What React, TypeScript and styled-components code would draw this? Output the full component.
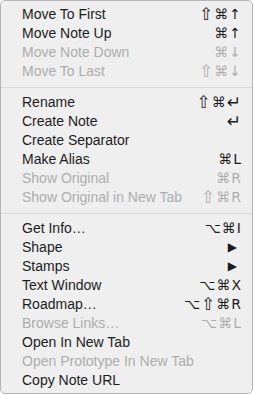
import React from "react";
import styled, { createGlobalStyle } from "styled-components";

const Global = createGlobalStyle`
  html, body { margin: 0; padding: 0; background: #ffffff; }
  #root { width: 253px; height: 394px; }
`;

const Menu = styled.div`
  box-sizing: border-box;
  width: 253px;
  height: 394px;
  background: #efefef;
  border: 1px solid #b4b4b4;
  border-radius: 5px;
  padding: 4px 0 3px;
  display: flex;
  flex-direction: column;
  font-family: "Liberation Sans", Arial, sans-serif;
  font-size: 14px;
  overflow: hidden;
`;

const Row = styled.div<{ $disabled?: boolean }>`
  height: 19px;
  display: flex;
  align-items: center;
  justify-content: space-between;
  padding: 0 11px 0 21px;
  color: ${(p) => (p.$disabled ? "#adadad" : "#1c1c1c")};
  white-space: nowrap;
`;

const Label = styled.span`
  line-height: 19px;
`;

const Shortcut = styled.span`
  display: flex;
  align-items: center;
  gap: 1px;
  font-family: "DejaVu Sans", "Liberation Sans", sans-serif;
  font-size: 14px;
  line-height: 19px;
`;

const Glyph = styled.span<{ $big?: boolean }>`
  font-size: ${(p) => (p.$big ? "17px" : "14px")};
  line-height: 19px;
`;

const Arrow = styled.span`
  font-family: "DejaVu Sans", sans-serif;
  font-size: 12px;
  line-height: 19px;
  padding-right: 4px;
`;

const Separator = styled.div`
  height: 12px;
  display: flex;
  align-items: center;
  &::after {
    content: "";
    flex: 1;
    height: 1px;
    background: #d9d9d9;
  }
`;

type Item =
  | { sep: true }
  | { label: string; key?: string; disabled?: boolean; submenu?: boolean; sep?: false };

const items: Item[] = [
  { label: "Move To First", key: "⇧⌘↑" },
  { label: "Move Note Up", key: "⌘↑" },
  { label: "Move Note Down", key: "⌘↓", disabled: true },
  { label: "Move To Last", key: "⇧⌘↓", disabled: true },
  { sep: true },
  { label: "Rename", key: "⇧⌘↵" },
  { label: "Create Note", key: "↵" },
  { label: "Create Separator" },
  { label: "Make Alias", key: "⌘L" },
  { label: "Show Original", key: "⌘R", disabled: true },
  { label: "Show Original in New Tab", key: "⇧⌘R", disabled: true },
  { sep: true },
  { label: "Get Info…", key: "⌥⌘I" },
  { label: "Shape", submenu: true },
  { label: "Stamps", submenu: true },
  { label: "Text Window", key: "⌥⌘X" },
  { label: "Roadmap…", key: "⌥⇧⌘R" },
  { label: "Browse Links…", key: "⌥⌘L", disabled: true },
  { label: "Open In New Tab" },
  { label: "Open Prototype In New Tab", disabled: true },
  { label: "Copy Note URL" },
];

export default function App() {
  return (
    <>
      <Global />
      <Menu>
        {items.map((it, i) =>
          it.sep ? (
            <Separator key={i} />
          ) : (
            <Row key={i} $disabled={it.disabled}>
              <Label>{it.label}</Label>
              {it.key && (
                <Shortcut>
                  {Array.from(it.key).map((g, j) => (
                    <Glyph key={j} $big={g === "⇧" || g === "↵"}>
                      {g}
                    </Glyph>
                  ))}
                </Shortcut>
              )}
              {it.submenu && <Arrow>▶</Arrow>}
            </Row>
          )
        )}
      </Menu>
    </>
  );
}
